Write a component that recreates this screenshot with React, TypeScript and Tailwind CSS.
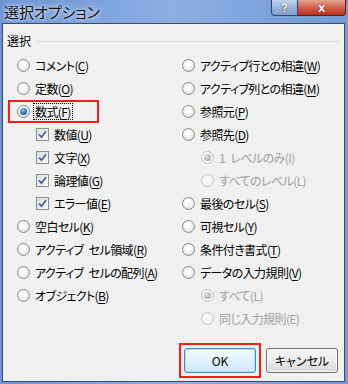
import type { ReactNode } from "react";

type Item = {
  label: ReactNode;
  kind: "radio" | "check";
  checked?: boolean;
  disabled?: boolean;
  indent?: boolean;
  focus?: boolean;
  mark?: boolean;
};

const acc = (before: string, key: string) => (
  <>
    {before}(<span className="underline underline-offset-[2px]">{key}</span>)
  </>
);

const leftItems: Item[] = [
  { label: acc("コメント", "C"), kind: "radio" },
  { label: acc("定数", "O"), kind: "radio" },
  { label: acc("数式", "F"), kind: "radio", checked: true, focus: true, mark: true },
  { label: acc("数値", "U"), kind: "check", checked: true, indent: true },
  { label: acc("文字", "X"), kind: "check", checked: true, indent: true },
  { label: acc("論理値", "G"), kind: "check", checked: true, indent: true },
  { label: acc("エラー値", "E"), kind: "check", checked: true, indent: true },
  { label: acc("空白セル", "K"), kind: "radio" },
  { label: acc("アクティブ\u2002セル領域", "R"), kind: "radio" },
  { label: acc("アクティブ\u2002セルの配列", "A"), kind: "radio" },
  { label: acc("オブジェクト", "B"), kind: "radio" },
];

const rightItems: Item[] = [
  { label: acc("アクティブ行との相違", "W"), kind: "radio" },
  { label: acc("アクティブ列との相違", "M"), kind: "radio" },
  { label: acc("参照元", "P"), kind: "radio" },
  { label: acc("参照先", "D"), kind: "radio" },
  { label: "1\u2002レベルのみ(I)", kind: "radio", checked: true, disabled: true, indent: true },
  { label: "すべてのレベル(L)", kind: "radio", disabled: true, indent: true },
  { label: acc("最後のセル", "S"), kind: "radio" },
  { label: acc("可視セル", "Y"), kind: "radio" },
  { label: acc("条件付き書式", "T"), kind: "radio" },
  { label: acc("データの入力規則", "V"), kind: "radio" },
  { label: "すべて(L)", kind: "radio", checked: true, disabled: true, indent: true },
  { label: "同じ入力規則(E)", kind: "radio", disabled: true, indent: true },
];

function Radio({ checked, disabled }: { checked?: boolean; disabled?: boolean }) {
  return (
    <span
      className={
        disabled
          ? "flex h-[13px] w-[13px] shrink-0 items-center justify-center rounded-full border border-[#c4c4c4] bg-[radial-gradient(circle_at_45%_40%,#fbfbfb,#ececec)]"
          : "flex h-[13px] w-[13px] shrink-0 items-center justify-center rounded-full border border-[#8c8c8c] bg-[radial-gradient(circle_at_45%_40%,#ffffff_20%,#d2d2d2)]"
      }
    >
      {checked && (
        <span
          className={
            disabled
              ? "h-[7px] w-[7px] rounded-full bg-[radial-gradient(circle_at_40%_35%,#e4e4e4,#9a9a9a)]"
              : "h-[7px] w-[7px] rounded-full bg-[radial-gradient(circle_at_40%_35%,#8fd0f5,#1e6aa8_60%,#0d3f70)]"
          }
        />
      )}
    </span>
  );
}

function Check() {
  return (
    <span className="flex h-[13px] w-[13px] shrink-0 items-center justify-center border border-[#8e8f8f] bg-[linear-gradient(135deg,#dcdcdc,#fcfcfc)]">
      <svg width="9" height="9" viewBox="0 0 9 9">
        <path d="M1 4.5 L3.5 7.2 L8 1.2" fill="none" stroke="#4b5f96" strokeWidth="1.8" />
      </svg>
    </span>
  );
}

function Row({ item }: { item: Item }) {
  return (
    <div className={`relative flex h-[23px] items-center ${item.indent ? "pl-[19px]" : ""}`}>
      {item.mark && (
        <span className="absolute left-[-9px] top-[0px] h-[23px] w-[91px] border-2 border-[#ff1a1a]" />
      )}
      {item.kind === "radio" ? <Radio checked={item.checked} disabled={item.disabled} /> : <Check />}
      <span
        className={`ml-[4px] whitespace-pre px-[1px] leading-[15px] tracking-[-0.6px] ${
          item.disabled ? "text-[#a0a0a0]" : "text-black"
        } ${item.focus ? "outline-1 outline-dotted outline-black" : ""}`}
      >
        {item.label}
      </span>
    </div>
  );
}

export default function App() {
  return (
    <div className="flex h-[384px] w-[348px] flex-col bg-[linear-gradient(90deg,#6d95d2,#8cafe2_50%,#7199d3)] font-['Noto_Sans_CJK_JP',sans-serif] text-[12px] [font-feature-settings:'palt']">
      <div className="flex h-[23px] shrink-0 items-start justify-between">
        <div className="pl-[4px] pt-[3px] text-[15px] leading-[17px] text-[#111] [text-shadow:0_0_6px_#e6efff,0_0_3px_#e6efff]">
          選択オプション
        </div>
        <div className="mr-[2px] flex">
          <div className="flex h-[16px] w-[27px] items-center justify-center rounded-bl-[4px] border border-t-0 border-[#34476a] bg-[linear-gradient(180deg,#c3d4ee,#9bb4da_50%,#7f9dcc)] font-['Liberation_Sans',sans-serif] text-[12px] font-bold leading-[14px] text-white [text-shadow:0_0_1px_#333,0_0_1px_#333]">
            ?
          </div>
          <div className="flex h-[16px] w-[48px] items-center justify-center rounded-br-[4px] border border-l-0 border-t-0 border-[#5a1f17] bg-[linear-gradient(180deg,#e7a493,#d0624d_50%,#b8301c)] font-['Liberation_Sans',sans-serif] text-[13px] font-bold leading-[14px] text-white [text-shadow:0_0_1px_#333,0_0_1px_#333]">
            x
          </div>
        </div>
      </div>

      <div className="mb-[2px] ml-[2px] mr-[3px] flex flex-1 flex-col border border-[#3b4e69] bg-[#f0f0f0]">
        <div className="mt-[9px] flex h-[16px] items-center pl-[4px] pr-[5px]">
          <span className="leading-[16px] text-black">選択</span>
          <span className="ml-[5px] h-px flex-1 bg-[#d5dfe5]" />
        </div>

        <div className="mt-[5px] grid grid-cols-[165px_1fr] pl-[14px]">
          <div className="flex flex-col">
            {leftItems.map((item, i) => (
              <Row key={i} item={item} />
            ))}
          </div>
          <div className="flex flex-col">
            {rightItems.map((item, i) => (
              <Row key={i} item={item} />
            ))}
          </div>
        </div>

        <div className="mt-auto mb-[3px] flex items-center justify-end gap-[5px] pr-[6px]">
          <div className="border-2 border-[#ff1a1a] p-[3px]">
            <button className="flex h-[25px] w-[72px] items-center justify-center rounded-[3px] border border-[#3c8fc0] bg-[linear-gradient(180deg,#f2f9fe,#e2f2fc_50%,#cbe7f9)] text-[12px] text-black shadow-[inset_0_0_0_1px_#b4e1f7]">
              OK
            </button>
          </div>
          <button className="flex h-[25px] w-[72px] items-center justify-center rounded-[3px] border border-[#707070] bg-[linear-gradient(180deg,#f4f4f4,#ebebeb_50%,#d9d9d9)] text-[12px] text-black shadow-[inset_0_0_0_1px_#fbfbfb]">
            キャンセル
          </button>
        </div>
      </div>
    </div>
  );
}
